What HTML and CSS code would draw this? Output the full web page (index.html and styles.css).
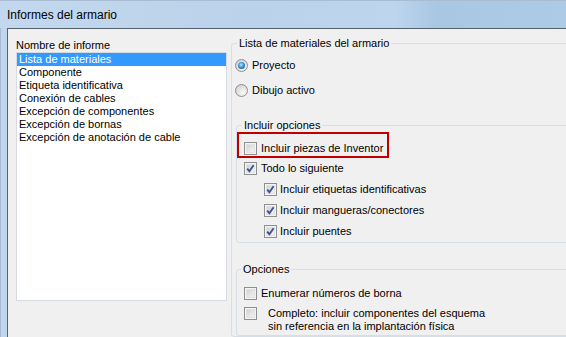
FILE: index.html
```html
<!DOCTYPE html>
<html lang="es">
<head>
  <meta charset="UTF-8" />
  <title>Informes del armario</title>
  <link rel="stylesheet" href="styles.css">
</head>
<body>
  <div class="window">
    <div class="titlebar">Informes del armario</div>
    <div class="frame">
      <div class="client">

        <div class="reports">
          <div class="caption">Nombre de informe</div>
          <ul class="listbox">
            <li class="selected">Lista de materiales</li>
            <li>Componente</li>
            <li>Etiqueta identificativa</li>
            <li>Conexión de cables</li>
            <li>Excepción de componentes</li>
            <li>Excepción de bornas</li>
            <li>Excepción de anotación de cable</li>
          </ul>
        </div>

        <fieldset class="group group-main">
          <legend>Lista de materiales del armario</legend>
          <div class="row row-first"><span class="radio on"></span>Proyecto</div>
          <div class="row row-radio2"><span class="radio"></span>Dibujo activo</div>

          <fieldset class="group group-include">
            <legend>Incluir opciones</legend>
            <div class="highlight">
              <div class="row"><span class="check"></span>Incluir piezas de Inventor</div>
            </div>
            <div class="row row-all"><span class="check on"><svg viewBox="0 0 11 11" width="11" height="11"><path d="M2.2 5.6 L4.4 8.2 L8.6 2.2" /></svg></span>Todo lo siguiente</div>
            <div class="row row-sub"><span class="check on"><svg viewBox="0 0 11 11" width="11" height="11"><path d="M2.2 5.6 L4.4 8.2 L8.6 2.2" /></svg></span>Incluir etiquetas identificativas</div>
            <div class="row row-sub"><span class="check on"><svg viewBox="0 0 11 11" width="11" height="11"><path d="M2.2 5.6 L4.4 8.2 L8.6 2.2" /></svg></span>Incluir mangueras/conectores</div>
            <div class="row row-sub"><span class="check on"><svg viewBox="0 0 11 11" width="11" height="11"><path d="M2.2 5.6 L4.4 8.2 L8.6 2.2" /></svg></span>Incluir puentes</div>
          </fieldset>

          <fieldset class="group group-options">
            <legend>Opciones</legend>
            <div class="row row-opt"><span class="check"></span>Enumerar números de borna</div>
            <div class="row row-opt row-multi"><span class="check"></span><span class="multi">Completo: incluir componentes del esquema<br>sin referencia en la implantación física</span></div>
          </fieldset>
        </fieldset>

      </div>
    </div>
  </div>
</body>
</html>
```

FILE: styles.css
```css
html, body {
  margin: 0;
  height: 100%;
  overflow: hidden;
}
body {
  font-family: "Liberation Sans", Arial, sans-serif;
  font-size: 11px;
  line-height: 13px;
  color: #000;
  background: #f0f0f0;
}
.window {
  display: flex;
  flex-direction: column;
  width: 100%;
  height: 337px;
  overflow: hidden;
}
.titlebar {
  box-sizing: border-box;
  height: 28px;
  padding: 2px 0 0 7px;
  display: flex;
  align-items: center;
  font-size: 12px;
  color: #000;
  border-top: 1px solid #a9bdd2;
  background: linear-gradient(90deg, #c3d8ee 0%, #bad2ea 45%, #bdd5ed 70%, #a9c6e3 77%, #adcae6 100%);
}
.frame {
  flex: 1;
  display: flex;
  min-width: 0;
  padding-left: 7px;
  background: linear-gradient(90deg, #a6bbd0 0, #a6bbd0 1px, #c0d6ec 1px);
}
.client {
  flex: 1;
  min-width: 0;
  display: flex;
  align-items: flex-start;
  overflow: hidden;
  background: #f0f0f0;
  border-left: 1px solid #56616e;
  border-top: 1px solid #56616e;
}

/* left: report list */
.reports {
  flex: none;
  padding: 10px 0 0 8px;
  width: 211px;
}
.caption {
  height: 13px;
}
.listbox {
  list-style: none;
  margin: 0;
  padding: 0;
  height: 247px;
  background: #fff;
  border: 1px solid #d6dbe1;
}
.listbox li {
  height: 13px;
  padding-left: 2px;
  white-space: nowrap;
}
.listbox li.selected {
  background: #3399ff;
  color: #fff;
}

/* group boxes */
.group {
  margin: 0;
  min-inline-size: 0;
  border: 1px solid #d5dfe5;
  border-radius: 3px;
}
.group legend {
  padding: 0 2px;
  line-height: 13px;
}
.group-main {
  flex: none;
  width: 380px;
  margin: 8px 0 0 4px;
  padding: 0 0 0 3px;
}
.group-main > legend {
  margin-left: 2px;
}
.group-include {
  margin: 20px 0 0 1px;
  padding: 0 0 2px 0;
}
.group-include > legend {
  margin-left: 5px;
}
.group-options {
  margin: 20px 0 0 1px;
  padding: 0 0 2px 0;
}
.group-options > legend {
  margin-left: 4px;
}

/* rows */
.row {
  display: flex;
  align-items: center;
  height: 17px;
  gap: 4px;
  white-space: nowrap;
}
.row-first {
  margin-top: 7px;
}
.row-radio2 {
  margin-top: 8px;
}
.highlight {
  display: inline-block;
  box-sizing: border-box;
  width: 152px;
  height: 26px;
  padding: 6px 0 0 5px;
  border: 2px solid #c00000;
}
.row-all {
  margin: 2px 0 0 7px;
}
.row-sub {
  margin: 4px 0 0 27px;
  gap: 3px;
}
.row-opt {
  margin-left: 7px;
}
.row-opt:first-of-type {
  margin-top: 9px;
}
.row-multi {
  margin-top: 5px;
  height: auto;
  align-items: flex-start;
  gap: 11px;
}
.multi {
  line-height: 13px;
}

/* controls */
.check {
  box-sizing: border-box;
  flex: none;
  width: 13px;
  height: 13px;
  border: 1px solid #8e8f8f;
  background: linear-gradient(135deg, #c9c9c9 0%, #e6e6e6 55%, #fafafa 100%);
  box-shadow: inset 0 0 0 1px #f4f4f4, inset 0 0 0 2px #e2e2e2;
}
.check svg {
  display: block;
  margin: 0;
}
.check svg path {
  fill: none;
  stroke: #3b5390;
  stroke-width: 1.9;
}
.radio {
  box-sizing: border-box;
  flex: none;
  position: relative;
  width: 13px;
  height: 13px;
  border-radius: 50%;
  border: 1px solid #8e8f8f;
  background: radial-gradient(circle at 65% 70%, #fbfbfb 0%, #e2e2e2 50%, #c8c8c8 100%);
}
.radio.on::after {
  content: "";
  position: absolute;
  left: 2px;
  top: 2px;
  width: 7px;
  height: 7px;
  border-radius: 50%;
  background: radial-gradient(circle at 45% 40%, #b9ecff 0%, #3d94d6 45%, #1a5a9c 80%, #143f70 100%);
}
```
